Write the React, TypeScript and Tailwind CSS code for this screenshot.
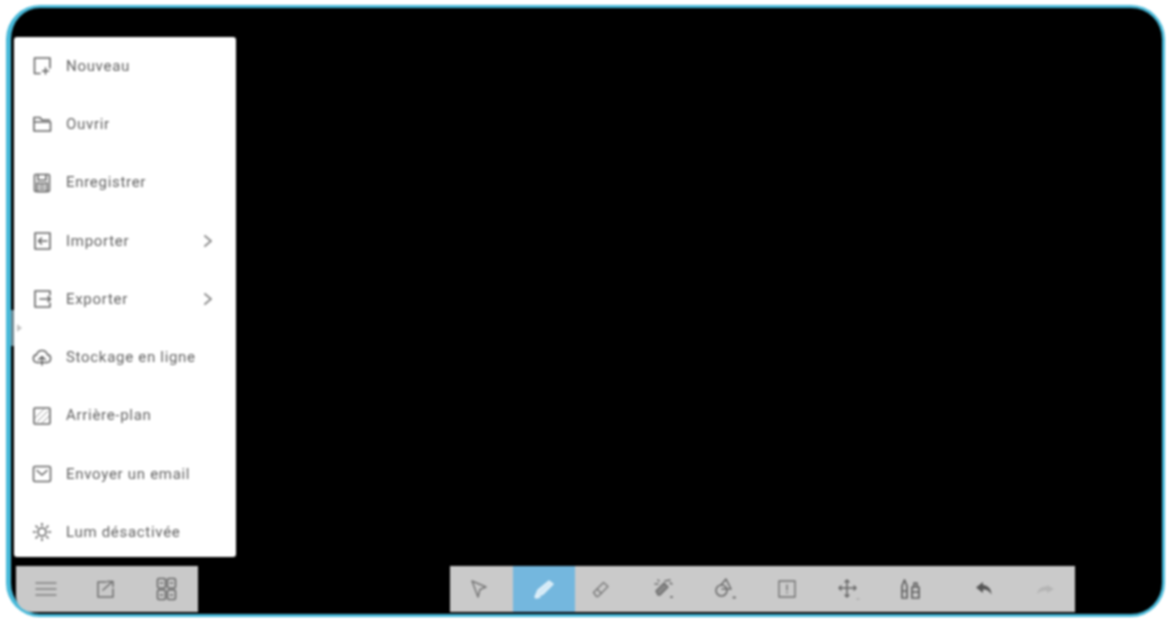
import React from "react";

const S = ({ children, w = 20, h = 20, vb = "0 0 20 20", sw = 1.6, c = "#666" }: any) => (
  <svg width={w} height={h} viewBox={vb} fill="none" stroke={c} strokeWidth={sw} strokeLinecap="round" strokeLinejoin="round">
    {children}
  </svg>
);

const menu: [React.ReactNode, string, boolean][] = [
  [<S><path d="M8 17.500H2.500V2h15.500v10" /><path d="M13.500 12v6M10.500 15h6" /></S>, "Nouveau", false],
  [<S><path d="M2 17V3.500h6l2 2.500h7.500M2 17h16.500V8H2" /></S>, "Ouvrir", false],
  [<S><rect x="2.500" y="1.500" width="15" height="17" rx="1" /><path d="M6 1.500v5.500h8V1.500M5 10h10v8.500H5zM7.500 12.500h5M7.500 15.500h5" /></S>, "Enregistrer", false],
  [<S><path d="M3 2h15v16H3zM15 10H6.500M9.500 7l-3 3 3 3" /></S>, "Importer", true],
  [<S><path d="M18 6V2H3v16h15v-4M8 10h10.500M16 7.500l2.500 2.500-2.500 2.500" /></S>, "Exporter", true],
  [<S><path d="M6 15.500H5a4 4 0 0 1-.4-7.900 5.600 5.600 0 0 1 10.800 0 4 4 0 0 1-.4 7.900h-1" /><path d="M10 18v-8.500M6.800 12.500 10 9.500l3.200 3M6 15.500h8" /></S>, "Stockage en ligne", false],
  [<S><rect x="2" y="2" width="16" height="16" rx="1" /><path d="M3 12 12 3M5 16l11-11M10 17l7-7" strokeWidth={1} stroke="#999" /></S>, "Arrière-plan", false],
  [<S><rect x="1.500" y="2.500" width="17" height="15" rx="1.500" /><path d="M5 6.500 10 11l5-4.500" /></S>, "Envoyer un email", false],
  [<S><circle cx="10" cy="10" r="4" /><path d="M10 1.500v2M10 16.500v2M1.500 10h2M16.500 10h2M4 4l1.500 1.500M14.500 14.500 16 16M4 16l1.500-1.500M14.500 5.500 16 4" /></S>, "Lum désactivée", false],
];

const Tool = ({ w, active, children }: any) => (
  <div className={`flex h-full shrink-0 items-center justify-center ${w} ${active ? "bg-[#74b7de]" : ""}`}>{children}</div>
);

export default function App() {
  return (
    <div className="h-[621px] w-[1168px] overflow-hidden bg-white pl-[6px] pt-[5px]">
      <div className="relative flex h-[612px] w-[1159px] flex-col justify-end rounded-[34px] border-y-[3px] border-l-[5px] border-r-[3px] border-[#47b9d9] bg-black pb-[2px] pl-[3px] [font-family:Roboto,'Liberation_Sans',sans-serif] blur-[1px]">
        <div className="absolute left-[0px] top-[302px] h-[36px] w-[3px] bg-[#6d8690]" />
        <div className="h-[520px] w-[222px] rounded-[3px] bg-white">
          {menu.map(([icon, label, arrow]) => (
            <div key={label} className="flex h-[58.25px] items-center">
              <div className="flex w-[52px] shrink-0 justify-center pl-[4px]">{icon}</div>
              <span className="whitespace-nowrap text-[15px] tracking-[0.7px] text-[#626262]">{label}</span>
              {arrow && (
                <div className="ml-auto mr-[22px]">
                  <S w={12} h={14} vb="0 0 12 14" sw={2} c="#8f8f8f"><path d="M3 2l6 5-6 5" /></S>
                </div>
              )}
            </div>
          ))}
        </div>
        <div className="absolute left-[6px] top-[316px] h-0 w-0 border-y-[4px] border-l-[5px] border-y-transparent border-l-[#c4c4c4]" />
        <div className="mt-[9px] flex h-[46px]">
          <div className="ml-[2px] flex w-[182px] items-center rounded-bl-[16px] bg-[#c9c9c9]">
            <div className="flex w-[60px] justify-center">
              <S w={22} h={18} vb="0 0 22 18" sw={1.4} c="#808080"><path d="M1 3h20M1 9h20M1 15h20" /></S>
            </div>
            <div className="flex w-[60px] justify-center">
              <S w={20} h={20} sw={1.5} c="#6f6f6f"><path d="M10 3H2v15h15v-8" /><path d="M7 11l9-8M11.500 2.500H17v5" /></S>
            </div>
            <div className="flex w-[60px] justify-center">
              <S w={21} h={24} vb="0 0 21 24" sw={1.6} c="#6a6a6a"><rect x="1.500" y="1.500" width="8" height="9.500" rx="1.500" /><rect x="11.500" y="1.500" width="8" height="9.500" rx="1.500" /><rect x="1.500" y="13" width="8" height="9.500" rx="1.500" /><rect x="11.500" y="13" width="8" height="9.500" rx="1.500" /><path d="M4.500 6h2M14.500 6h2M4.500 18h2M14.500 18h2" /></S>
            </div>
          </div>
          <div className="ml-[252px] flex w-[625px] items-center bg-[#cacaca]">
            <Tool w="w-[63px] pr-[6px]">
              <S w={18} h={20} vb="0 0 18 20" sw={1.5} c="#777"><path d="M2 2l14 6-6 2.500L8 18z" /></S>
            </Tool>
            <Tool w="w-[62px]" active>
              <S w={26} h={24} vb="0 0 26 24" sw={1.5} c="#e4f2fa"><path d="M4 20l3-7L18 4l4 3-10 10z" fill="#d4eaf7" /><path d="M5 21l4-1" /></S>
            </Tool>
            <Tool w="w-[52px]">
              <S w={20} h={20} sw={1.5} c="#7d7d7d"><path d="M2.500 13.500 12.500 3.500l4.500 4-10 10H5.500z" /><path d="M6 10l4.500 4.500" /></S>
            </Tool>
            <Tool w="w-[62px] ml-[5px]">
              <S w={22} h={22} vb="0 0 22 22" sw={1.6} c="#707070"><path d="M4 13 12 5l4 4-8 8H6z" fill="#888" /><path d="M13 3l5-1M18 5l2 1M3 6h3M6 2l1 1" /><path d="M19 19h1" strokeWidth={2} /></S>
            </Tool>
            <Tool w="w-[62px]">
              <S w={24} h={24} vb="0 0 24 24" sw={1.6} c="#6d6d6d"><circle cx="8.500" cy="13.500" r="5.500" /><path d="M8 8l5-6 5 10H9" /><path d="M20.500 20.500h1.500" strokeWidth={2} /></S>
            </Tool>
            <Tool w="w-[61.5px]">
              <S w={20} h={20} sw={1.4} c="#737373"><rect x="2" y="2" width="16" height="16" /><path d="M10 6v5M10 13.500v.5" /></S>
            </Tool>
            <Tool w="w-[61.5px]">
              <S w={24} h={24} vb="0 0 24 24" sw={1.5} c="#666"><path d="M11 3v17M3 11h17M9 5l2-2 2 2M9 18l2 2 2-2M5 9l-2 2 2 2M18 9l2 2-2 2" /><path d="M21 22h2" strokeWidth={1} stroke="#999" /></S>
            </Tool>
            <Tool w="w-[61.5px]">
              <S w={22} h={24} vb="0 0 22 24" sw={1.7} c="#606060"><path d="M3 21V9l2.500-6L8 9v12zM13 21V10h7v11zM15 10V6h3v4M3 14h5M13 15h7" /></S>
            </Tool>
            <Tool w="w-[62px] ml-[13px]">
              <svg width="20" height="16" viewBox="0 0 20 16"><path d="M8 1 1 6.500 8 12V8.500c3.500 0 6 1 8.500 5 0-5-3-9-8.500-9.500z" fill="#555" /></svg>
            </Tool>
            <Tool w="w-[59px]">
              <svg width="20" height="12" viewBox="0 0 20 12"><path d="M12 2l7 4-7 4V7.500C8 7.500 5 8 2 11c1-5 4-7.500 10-7.500z" fill="#b5b5b5" /></svg>
            </Tool>
          </div>
        </div>
      </div>
    </div>
  );
}
